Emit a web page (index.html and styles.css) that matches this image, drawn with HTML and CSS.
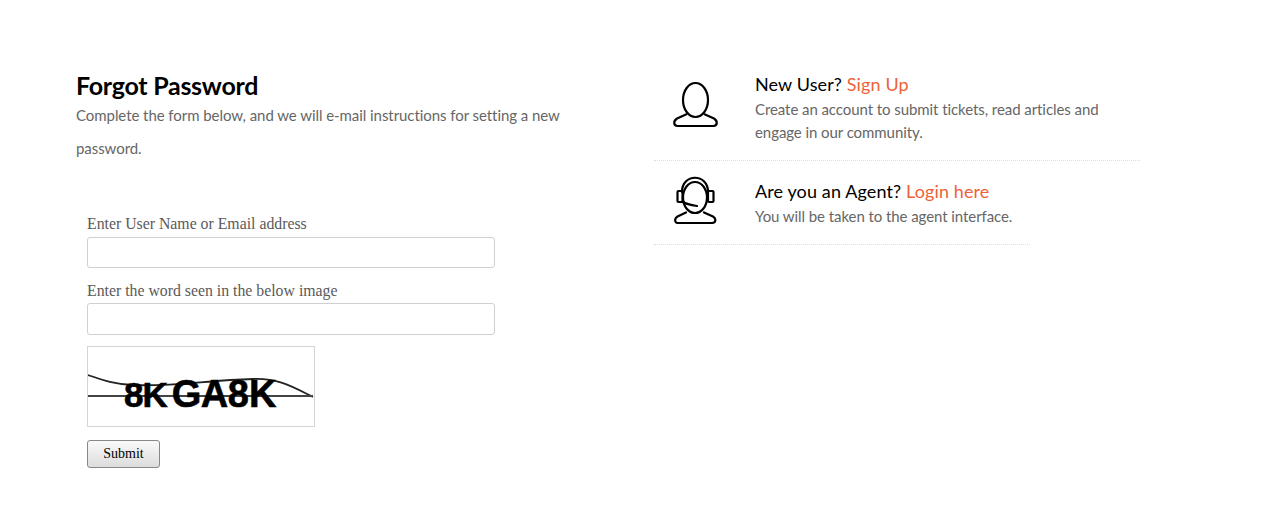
FILE: index.html
```html
<!DOCTYPE html>
<html lang="en">
<head>
<meta charset="utf-8">
<title>Forgot Password</title>
<link rel="stylesheet" href="styles.css">
</head>
<body>
<main class="page">
  <section class="left">
    <h1 class="title">Forgot Password</h1>
    <p class="intro">Complete the form below, and we will e-mail instructions for setting a new password.</p>
    <form class="form">
      <label class="label" for="user">Enter User Name or Email address</label>
      <input class="field" id="user" type="text">
      <label class="label label-second" for="word">Enter the word seen in the below image</label>
      <input class="field field-second" id="word" type="text">
      <div class="captcha">
        <svg class="captcha-lines" width="226" height="79" viewBox="0 0 226 79" fill="none" stroke="#222">
          <path d="M0 28C12 32 24 37 45 38C85 40 120 33 165 32C190 31 205 40 225 50" stroke-width="1.800"/>
          <path d="M0 49H225" stroke-width="2" stroke="#444"/>
        </svg>
        <span class="captcha-word"><span class="cw-small">8K</span><span class="cw-big">GA</span><span class="cw-mid">8K</span></span>
      </div>
      <button class="submit" type="button">Submit</button>
    </form>
  </section>
  <aside class="right">
    <div class="option option-first">
      <svg class="icon" width="48" height="48" viewBox="0 0 48 48" fill="none" stroke="#000" stroke-width="2.2" stroke-linejoin="round">
        <ellipse cx="23.500" cy="19" rx="12.500" ry="17"/>
        <path d="M15 33 5 37.500C1 40 1.500 45 5.500 45H41.500C45.500 45 46 40 42 37.500L32 33"/>
      </svg>
      <div class="option-body">
        <h2 class="option-title">New User? <a class="link" href="#">Sign Up</a></h2>
        <p class="option-text">Create an account to submit tickets, read articles and engage in our community.</p>
      </div>
    </div>
    <div class="option option-second">
      <svg class="icon" width="48" height="48" viewBox="0 0 48 48" fill="none" stroke="#000" stroke-width="2.2" stroke-linejoin="round" stroke-linecap="round">
        <ellipse cx="23" cy="21.500" rx="12" ry="15.500"/>
        <path d="M10 16C10 -3 36 -3 36 16"/>
        <rect x="5.500" y="15" width="5" height="11" rx="1"/>
        <rect x="36" y="15" width="5.500" height="11" rx="1"/>
        <path d="M11 26C14 28 19 29 25 30"/>
        <path d="M14 36.500 5.500 40.500C2 42.500 2.500 47 6 47H40C44 47 44.500 42.500 41 40.500L32 36.500"/>
      </svg>
      <div class="option-body">
        <h2 class="option-title">Are you an Agent? <a class="link" href="#">Login here</a></h2>
        <p class="option-text">You will be taken to the agent interface.</p>
      </div>
    </div>
  </aside>
</main>
</body>
</html>
```
FILE: styles.css
```css
html, body { margin: 0; padding: 0; background: #fff; }
body { font-family: "Lato", sans-serif; color: #666; }
.page { display: flex; align-items: flex-start; padding: 69px 0 0 76px; }
.left { width: 500px; margin-right: 78px; flex: none; }
.title { margin: 0; padding-top: 2px; font-size: 25px; line-height: 28px; font-weight: 700; letter-spacing: -0.27px; color: #000; }
.intro { margin: 0; font-size: 15px; line-height: 33px; letter-spacing: -0.06px; color: #666; width: 490px; }
.form { display: flex; flex-direction: column; align-items: flex-start; padding: 51px 0 0 11px; }
.label { font-family: "Liberation Serif", serif; font-size: 15.800px; line-height: 16px; color: #5a5a5a; }
.field { box-sizing: border-box; display: block; width: 408px; height: 31px; margin-top: 5px; border: 1px solid #d0d0d0; border-radius: 3px; background: #fff; padding: 0 8px; }
.label-second { margin-top: 15px; }
.field-second { height: 32px; margin-top: 4px; }
.captcha { position: relative; box-sizing: border-box; width: 228px; height: 81px; margin-top: 11px; border: 1px solid #d4d4d4; overflow: hidden; background: #fff; }
.captcha-lines { position: absolute; left: 0; top: 0; }
.captcha-word { position: absolute; left: 36px; top: 30px; display: flex; align-items: baseline; font-family: "Liberation Sans", sans-serif; font-weight: 700; color: #000; line-height: 34px; -webkit-text-stroke: 0.6px #000; }
.cw-small { font-size: 35px; letter-spacing: -1px; }
.cw-big { font-size: 38px; margin-left: 5px; letter-spacing: -0.5px; }
.cw-mid { font-size: 38px; letter-spacing: 0; }
.submit { box-sizing: border-box; width: 73px; height: 28px; margin-top: 13px; padding: 0; border: 1px solid #888; border-radius: 3px; background: linear-gradient(#fafafa, #dcdcdc); font-family: "Liberation Serif", serif; font-size: 14px; color: #000; }
.right { width: 486px; flex: none; }
.option { display: flex; border-bottom: 1px dotted #ddd; }
.option-first { padding: 3px 0 16px 18px; }
.option-second { width: 376px; box-sizing: border-box; padding: 18px 0 16px 18px; }
.icon { flex: none; margin: 9px 0 0 0; }
.option-second .icon { margin: -3px 0 0 0; }
.option-body { margin-left: 35px; width: 370px; }
.option-title { margin: 0 0 2px; font-size: 18px; line-height: 24px; font-weight: 400; letter-spacing: 0.12px; color: #000; }
.link { color: #ee6238; text-decoration: none; }
.option-text { margin: 0; font-size: 15px; line-height: 23px; letter-spacing: -0.07px; color: #666; }
```
